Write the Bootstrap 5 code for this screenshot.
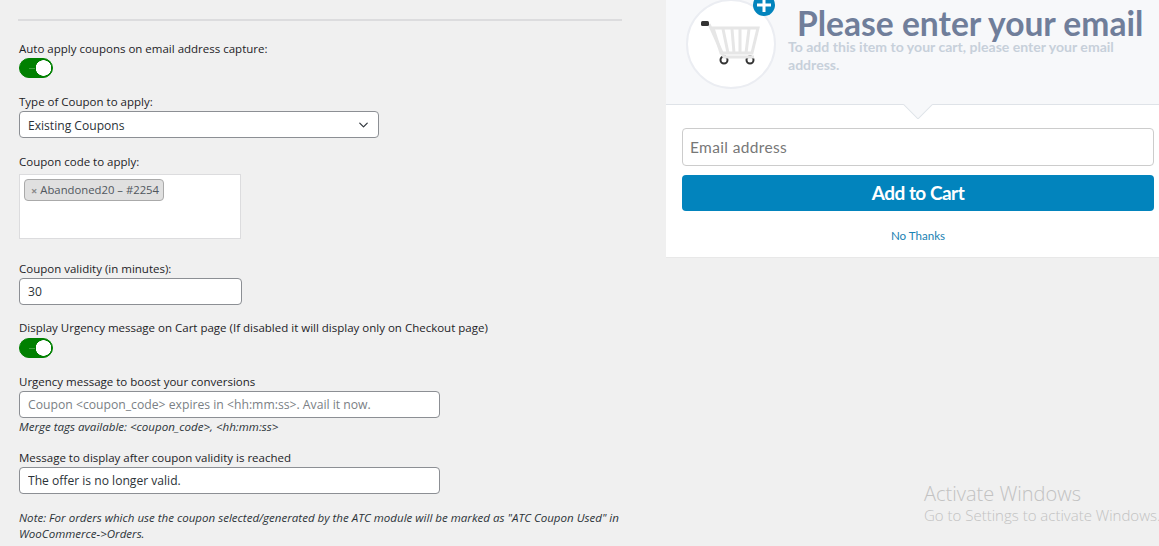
<!DOCTYPE html>
<html lang="en">
<head>
    <meta charset="UTF-8">
    <meta name="viewport" content="width=device-width, initial-scale=1.0">
    <title>Coupon settings</title>
    <link href="https://cdn.jsdelivr.net/npm/bootstrap@5.3.0/dist/css/bootstrap.min.css" rel="stylesheet">
    <style>
        html, body { height: 100%; }
        body { background: #f0f0f0; overflow: hidden; font-family: "Open Sans", "Noto Sans", sans-serif; font-size: 12px; color: #2c3338; }
        .page-wrap { height: 546px; position: relative; }
        .settings-col { width: 604px; margin-left: 18px; flex: none; }
        .top-rule { height: 2px; background: #dcdcde; margin: 19px 0 0; }
        .fld-label { display: block; font-size: 11.5px; line-height: 14px; padding-bottom: 2px; margin: 0 0 0 1px; font-weight: 500; color: #1d2327; }
        .wp-ctl.form-control, .wp-ctl.form-select { font-size: 12.1px; color: #2c3338; border: 1px solid #8c8f94; border-radius: 4px; min-height: 0; height: 27px; padding: 0 8px; line-height: 25px; margin-left: 1px; box-shadow: none; }
        .wp-ctl.form-select { padding-top: 1px; padding-right: 24px; background-position: right 8px center; background-size: 13px 10px; }
        .wp-ctl::placeholder { color: #7b7f85; opacity: 1; font-size: 12.2px; }
        .w-select { width: 360px; }
        .w-short { width: 223px; }
        .w-long { width: 421px; }
        .wp-toggle.form-check-input { display: block; width: 34px; height: 20px; margin: 0 0 0 1px; float: none; border: 1px solid #008000; border-radius: 10px; background-color: #008000; background-image: radial-gradient(circle at 23.5px 9px, #fff 7.5px, transparent 8px), linear-gradient(#3f9f3f, #3f9f3f); background-size: auto, 6px 1px; background-position: 0 0, 9px 9px; background-repeat: no-repeat; box-shadow: none; }
        .toggle-low.form-check-input { margin-top: 1px; }
        .tag-box { width: 222px; height: 65px; margin-left: 1px; margin-top: 3px; background: #fff; border: 1px solid #dcdcde; padding: 4px; }
        .coupon-tag { display: inline-flex; align-items: center; gap: 3px; height: 22px; padding: 0 4px 0 6px; font-size: 11.3px; background: #e0e0e0; border: 1px solid #aaa; border-radius: 4px; color: #50575e; line-height: 20px; }
        .coupon-tag i { font-style: normal; color: #888; font-size: 11px; font-weight: 700; line-height: 1; }
        .hint-text { font-style: italic; font-size: 11.55px; line-height: 16px; color: #2c3338; margin: 1px 0 0 1px; }
        .gap-a { margin-top: 17px; }
        .gap-b { margin-top: 17px; }
        .gap-c { margin-top: 16px; }
        .gap-d { margin-top: 23px; }
        .gap-e { margin-top: 16px; }
        .popup-col { width: 493px; height: 258px; margin-left: 44px; flex: none; background: #fff; border-bottom: 1px solid #e8e8e8; font-family: Lato, sans-serif; }
        .popup-head { height: 105px; background: #f7f8fa; border-bottom: 1px solid #dfe3e8; position: relative; padding: 0 0 0 122px; }
        .cart-disc { position: absolute; left: 20px; top: -1px; width: 90px; height: 90px; border-radius: 50%; background: #fff; border: 2px solid #ebedf2; }
        .plus-badge { position: absolute; left: 87px; top: -6px; width: 22px; height: 22px; border-radius: 50%; background: #0284bd; }
        .popup-title { font-size: 33.6px; font-weight: 700; line-height: 30px; color: #707e9a; margin: 0 0 0 9px; padding-top: 8px; white-space: nowrap; }
        .popup-sub { font-size: 14.07px; font-weight: 700; line-height: 18px; color: #c7d0da; margin: 0; width: 345px; }
        .head-notch { position: absolute; left: 237px; bottom: -15px; width: 30px; height: 15px; overflow: hidden; }
        .head-notch::after { content: ""; position: absolute; left: 4px; top: -11px; width: 22px; height: 22px; background: #f7f8fa; border: 1px solid #dfe3e8; transform: rotate(45deg); }
        .popup-body { padding: 23px 5px 0 16px; }
        .popup-email.form-control { height: 38px; font-size: 15.5px; letter-spacing: .35px; padding: 0 7px; border: 1px solid #ccc; border-radius: 4px; box-shadow: none; }
        .popup-email::placeholder { color: #777; opacity: 1; }
        .popup-btn.btn { display: block; width: 100%; height: 36px; margin-top: 9px; padding: 0; background: #0284bd; border: 0; border-radius: 4px; color: #fff; font-size: 19px; font-weight: 700; letter-spacing: -.5px; line-height: 36px; }
        .no-thanks { display: block; margin-top: 17px; text-align: center; font-size: 11.6px; line-height: 16px; color: #1a82b3; text-decoration: none; }
        .activate-mark { position: absolute; left: 924px; top: 482px; color: #c2c2c2; white-space: nowrap; font-family: "Open Sans", sans-serif; font-weight: 300; }
        .activate-mark div:first-child { font-size: 20px; line-height: 23px; }
        .activate-mark div:last-child { font-size: 15px; line-height: 21px; }
    </style>
</head>
<body>
    <div class="page-wrap d-flex align-items-start">
        <div class="settings-col">
            <div class="top-rule"></div>

            <label class="fld-label" style="margin-top:21px">Auto apply coupons on email address capture:</label>
            <input class="form-check-input wp-toggle" type="checkbox" checked>

            <label class="fld-label gap-a">Type of Coupon to apply:</label>
            <select class="form-select wp-ctl w-select">
                <option>Existing Coupons</option>
            </select>

            <label class="fld-label gap-b">Coupon code to apply:</label>
            <div class="tag-box">
                <span class="coupon-tag"><i>×</i>Abandoned20 – #2254</span>
            </div>

            <label class="fld-label gap-d">Coupon validity (in minutes):</label>
            <input type="text" class="form-control wp-ctl w-short" value="30">

            <label class="fld-label gap-c">Display Urgency message on Cart page (If disabled it will display only on Checkout page)</label>
            <input class="form-check-input wp-toggle toggle-low" type="checkbox" checked>

            <label class="fld-label gap-b">Urgency message to boost your conversions</label>
            <input type="text" class="form-control wp-ctl w-long" placeholder="Coupon <coupon_code> expires in <hh:mm:ss>. Avail it now.">
            <p class="hint-text">Merge tags available: &lt;coupon_code&gt;, &lt;hh:mm:ss&gt;</p>

            <label class="fld-label gap-e">Message to display after coupon validity is reached</label>
            <input type="text" class="form-control wp-ctl w-long" value="The offer is no longer valid.">

            <p class="hint-text gap-e">Note: For orders which use the coupon selected/generated by the ATC module will be marked as "ATC Coupon Used" in WooCommerce-&gt;Orders.</p>
        </div>

        <div class="popup-col">
            <div class="popup-head">
                <div class="cart-disc">
                    <svg width="86" height="86" viewBox="0 0 86 86" fill="none">
                        <circle cx="36" cy="59" r="3.5" stroke="#333" stroke-width="2"/>
                        <circle cx="62" cy="59" r="3.5" stroke="#333" stroke-width="2"/>
                        <path d="M21 23l15 33h30" stroke="#e6e6e6" stroke-width="3"/>
                        <path d="M25 27h45l-6 25H33z" stroke="#e6e6e6" stroke-width="3"/>
                        <path d="M35 28l5 24M44 28l2 24M52 28v24M61 28l-3 24" stroke="#e6e6e6" stroke-width="3"/>
                        <rect x="13" y="20" width="8" height="5" rx="1.5" fill="#333"/>
                    </svg>
                </div>
                <div class="plus-badge">
                    <svg width="22" height="22" viewBox="0 0 22 22"><path d="M11 4v14M4 11h14" stroke="#fff" stroke-width="3"/></svg>
                </div>
                <div class="popup-title">Please enter your email</div>
                <div class="popup-sub">To add this item to your cart, please enter your email address.</div>
                <div class="head-notch"></div>
            </div>
            <div class="popup-body">
                <input type="email" class="form-control popup-email" placeholder="Email address">
                <button type="button" class="btn popup-btn">Add to Cart</button>
                <a href="#" class="no-thanks">No Thanks</a>
            </div>
        </div>

        <div class="activate-mark">
            <div>Activate Windows</div>
            <div>Go to Settings to activate Windows.</div>
        </div>
    </div>
</body>
</html>
